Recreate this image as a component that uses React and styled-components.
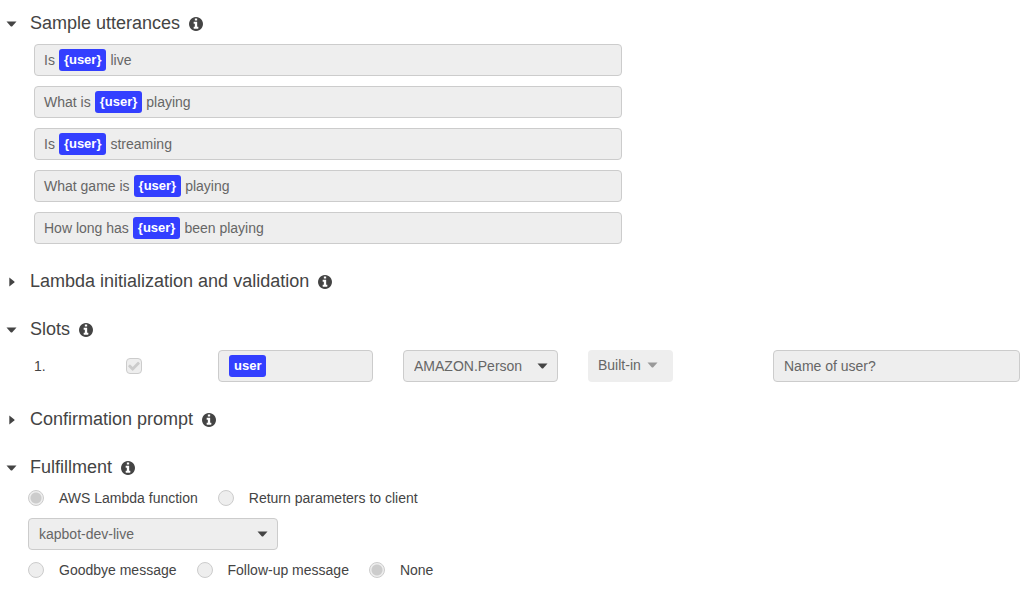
import React, { useState } from "react";
import styled, { createGlobalStyle } from "styled-components";

const GlobalStyle = createGlobalStyle`
  * {
    box-sizing: border-box;
  }
  body {
    margin: 0;
    background: #fff;
    color: #444;
    font-family: "Helvetica Neue", "Liberation Sans", Arial, sans-serif;
    font-size: 14px;
    line-height: 20px;
  }
  button,
  input,
  select {
    font: inherit;
  }
`;

const Page = styled.main`
  display: flex;
  flex-direction: column;
  gap: 24px;
  padding: 11px 10px 8px 6px;
`;

const SectionHeader = styled.header`
  display: flex;
  align-items: center;
  gap: 9px;
`;

const Heading = styled.h2`
  margin: 0;
  font-size: 18px;
  font-weight: 400;
  line-height: 24px;
`;

const Toggle = styled.button`
  display: flex;
  align-items: center;
  padding: 0;
  border: 0;
  background: none;
  color: #444;
  line-height: 24px;
  cursor: pointer;
`;

const ToggleMark = styled.span`
  display: flex;
  width: 24px;
  padding: ${(props) => (props.$open ? "2px 0 0" : "2px 0 0 3px")};
`;

const InfoButton = styled.button`
  display: flex;
  padding: 2px 0 0;
  border: 0;
  background: none;
  color: #444;
`;

const SectionBody = styled.div`
  padding: 9px 0 1px ${(props) => props.$indent}px;
`;

const UtteranceList = styled.ul`
  display: grid;
  gap: 10px;
  max-width: 588px;
  margin: 0;
  padding: 0;
  list-style: none;
`;

const Field = styled.div`
  display: flex;
  align-items: center;
  gap: 4px;
  height: 32px;
  padding: 0 ${(props) => (props.$slot ? 10 : 9)}px;
  border: 1px solid #ccc;
  border-radius: 4px;
  background: #eee;
  color: #666;
`;

const Chip = styled.span`
  padding: 1px 5px;
  border-radius: 3px;
  background: #333fff;
  color: #fff;
  font-size: 13px;
  font-weight: 700;
`;

const SlotRow = styled.div`
  display: grid;
  grid-template-columns:
    minmax(0, 62fr) minmax(0, 62fr) minmax(0, 155fr) minmax(0, 155fr)
    minmax(0, 155fr) minmax(0, 247fr);
  gap: 30px;
  align-items: center;
`;

const PromptInput = styled.input`
  width: 100%;
  height: 32px;
  padding: 0 10px;
  border: 1px solid #ccc;
  border-radius: 4px;
  background: #eee;
  color: #666;
`;

const CheckWrap = styled.span`
  position: relative;
  display: flex;
  width: 16px;
  height: 16px;
  color: #ccc;

  svg {
    position: absolute;
    top: 2px;
    left: 2px;
    pointer-events: none;
  }
`;

const Checkbox = styled.input`
  width: 16px;
  height: 16px;
  margin: 0;
  appearance: none;
  border: 1px solid #ccc;
  border-radius: 4px;
  background: #eee;
`;

const SelectWrap = styled.span`
  position: relative;
  display: block;
  width: ${(props) => props.$width || "100%"};

  svg {
    position: absolute;
    top: 13px;
    right: 10px;
    pointer-events: none;
  }
`;

const Select = styled.select`
  display: block;
  width: 100%;
  height: 32px;
  padding: 0 24px 0 10px;
  appearance: none;
  border: 1px solid #ccc;
  border-radius: 4px;
  background: #eee;
  color: #666;
`;

const VersionButton = styled.button`
  display: flex;
  align-items: center;
  justify-self: start;
  gap: 6px;
  height: 32px;
  padding: 0 15px 2px 10px;
  border: 0;
  border-radius: 4px;
  background: #eee;
  color: #666;

  svg {
    color: #999;
  }
`;

const Fulfillment = styled.div`
  display: grid;
  gap: 10px;
  padding-bottom: 1px;
`;

const RadioGroup = styled.div`
  display: flex;
  flex-wrap: wrap;
  gap: 20px;
`;

const RadioLabel = styled.label`
  display: flex;
  align-items: center;
  gap: 15px;
`;

const Radio = styled.input`
  width: 16px;
  height: 16px;
  margin: 0;
  appearance: none;
  border: 1px solid #ccc;
  border-radius: 50%;
  background: #eee;

  &:checked {
    background: radial-gradient(circle, #ccc 5px, #eee 6px);
  }
`;

const utterances = [
  ["Is", "live"],
  ["What is", "playing"],
  ["Is", "streaming"],
  ["What game is", "playing"],
  ["How long has", "been playing"],
];

function InfoIcon() {
  return (
    <svg
      width="14"
      height="14"
      viewBox="128 128 1536 1536"
      aria-hidden="true"
    >
      <path
        fill="currentColor"
        d="M1152 1376v-160q0-14-9-23t-23-9h-96v-512q0-14-9-23t-23-9h-320q-14 0-23 9t-9 23v160q0 14 9 23t23 9h96v320h-96q-14 0-23 9t-9 23v160q0 14 9 23t23 9h448q14 0 23-9t9-23zm-128-896v-160q0-14-9-23t-23-9h-192q-14 0-23 9t-9 23v160q0 14 9 23t23 9h192q14 0 23-9t9-23zm640 416q0 209-103 385.5t-279.5 279.5-385.5 103-385.5-103-279.5-279.5-103-385.5 103-385.5 279.5-279.5 385.5-103 385.5 103 279.5 279.5 103 385.5z"
      />
    </svg>
  );
}

function CheckIcon() {
  return (
    <svg width="12" height="12" viewBox="96 96 1600 1600" aria-hidden="true">
      <path
        fill="currentColor"
        d="M1671 566q0 40-28 68l-724 724-136 136q-28 28-68 28t-68-28l-136-136-362-362q-28-28-28-68t28-68l136-136q28-28 68-28t68 28l294 295 656-657q28-28 68-28t68 28l136 136q28 28 28 68z"
      />
    </svg>
  );
}

function CaretDown() {
  return (
    <svg width="11" height="6" viewBox="0 0 11 6" aria-hidden="true">
      <path d="M.5.5h10L6.3 5.2Q5.5 6 4.7 5.2Z" fill="currentColor" />
    </svg>
  );
}

function CaretRight() {
  return (
    <svg width="6" height="10" viewBox="0 0 6 10" aria-hidden="true">
      <path d="M.3.5 5.3 4.4Q5.9 5 5.3 5.6L.3 9.5Z" fill="currentColor" />
    </svg>
  );
}

function Section({ title, defaultOpen, indent = 28, children }) {
  const [open, setOpen] = useState(Boolean(defaultOpen));
  return (
    <section>
      <SectionHeader>
        <Heading>
          <Toggle aria-expanded={open} onClick={() => setOpen(!open)}>
            <ToggleMark $open={open}>
              {open ? <CaretDown /> : <CaretRight />}
            </ToggleMark>
            {title}
          </Toggle>
        </Heading>
        <InfoButton aria-label={`About ${title}`}>
          <InfoIcon />
        </InfoButton>
      </SectionHeader>
      {open && children && (
        <SectionBody $indent={indent}>{children}</SectionBody>
      )}
    </section>
  );
}

function RadioOptions({ name, label, options, initial }) {
  const [value, setValue] = useState(initial);
  return (
    <RadioGroup role="radiogroup" aria-label={label}>
      {options.map((option) => (
        <RadioLabel key={option}>
          <Radio
            type="radio"
            name={name}
            checked={value === option}
            onChange={() => setValue(option)}
          />
          {option}
        </RadioLabel>
      ))}
    </RadioGroup>
  );
}

export default function App() {
  return (
    <>
      <GlobalStyle />
      <Page>
        <Section title="Sample utterances" defaultOpen>
          <UtteranceList>
            {utterances.map(([before, after]) => (
              <li key={`${before}${after}`}>
                <Field>
                  <span>{before}</span>
                  <Chip>{"{user}"}</Chip>
                  <span>{after}</span>
                </Field>
              </li>
            ))}
          </UtteranceList>
        </Section>
        <Section title="Lambda initialization and validation" />
        <Section title="Slots" defaultOpen>
          <SlotRow>
            <span>1.</span>
            <CheckWrap>
              <Checkbox
                type="checkbox"
                aria-label="Required"
                defaultChecked
                disabled
              />
              <CheckIcon />
            </CheckWrap>
            <Field $slot>
              <Chip>user</Chip>
            </Field>
            <SelectWrap>
              <Select aria-label="Slot type" defaultValue="AMAZON.Person">
                <option>AMAZON.Person</option>
              </Select>
              <CaretDown />
            </SelectWrap>
            <VersionButton>
              Built-in
              <CaretDown />
            </VersionButton>
            <PromptInput aria-label="Prompt" defaultValue="Name of user?" />
          </SlotRow>
        </Section>
        <Section title="Confirmation prompt" />
        <Section title="Fulfillment" defaultOpen indent={22}>
          <Fulfillment>
            <RadioOptions
              name="fulfillment"
              label="Fulfillment type"
              options={["AWS Lambda function", "Return parameters to client"]}
              initial="AWS Lambda function"
            />
            <SelectWrap $width="250px">
              <Select aria-label="Lambda function" defaultValue="kapbot-dev-live">
                <option>kapbot-dev-live</option>
              </Select>
              <CaretDown />
            </SelectWrap>
            <RadioOptions
              name="closing"
              label="Closing response"
              options={["Goodbye message", "Follow-up message", "None"]}
              initial="None"
            />
          </Fulfillment>
        </Section>
      </Page>
    </>
  );
}
